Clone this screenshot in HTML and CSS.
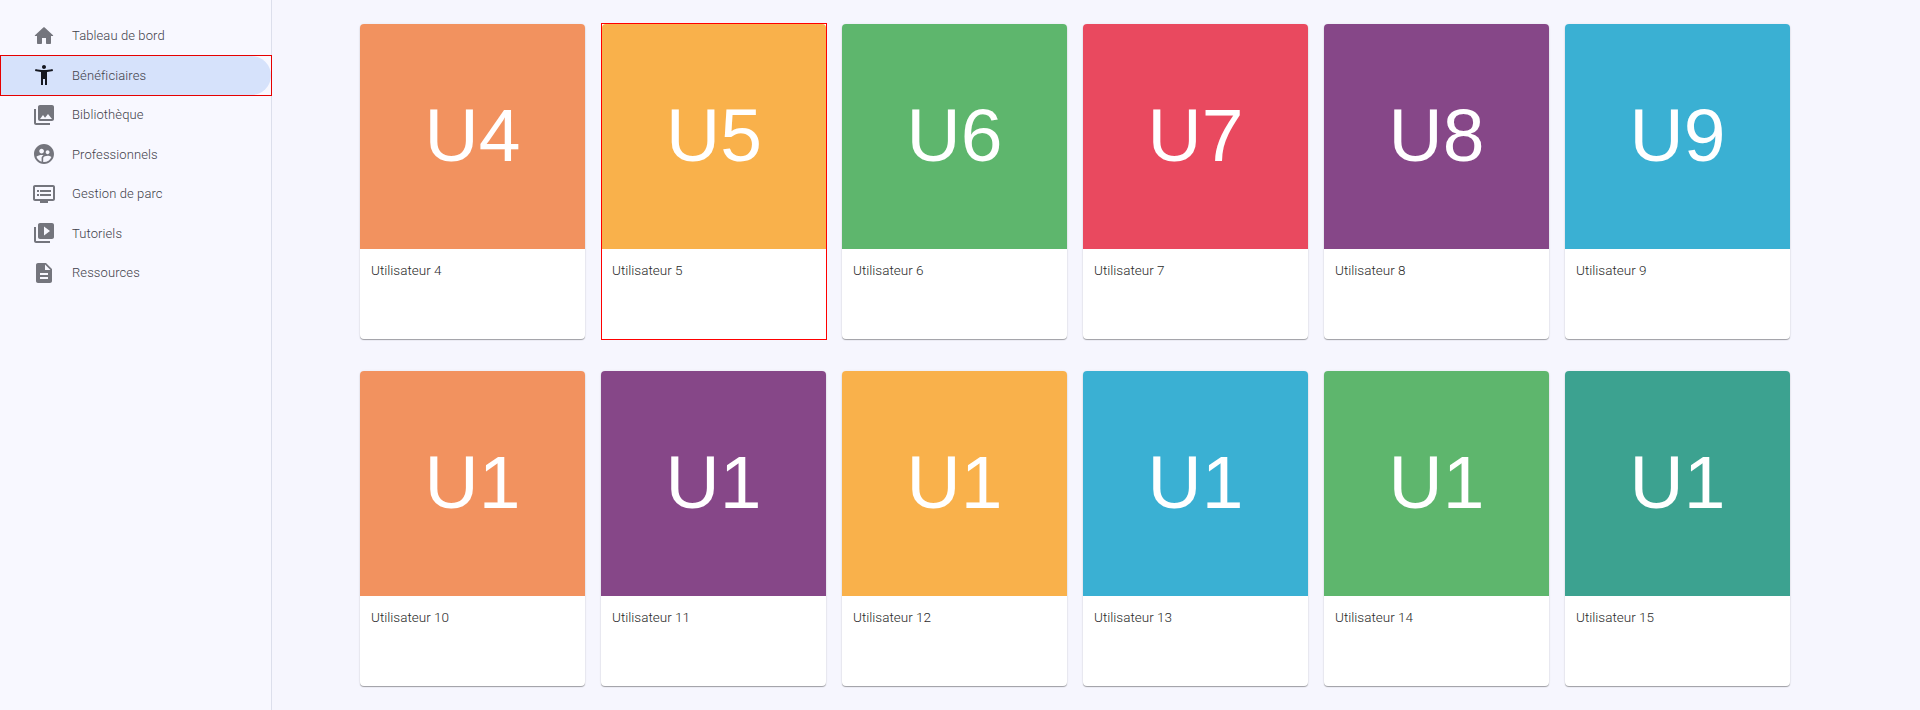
FILE: index.html
```html
<!DOCTYPE html>
<html lang="fr">
<head>
  <meta charset="UTF-8">
  <title>Bénéficiaires</title>
  <meta name="viewport" content="width=device-width,initial-scale=1">
  <link rel="stylesheet" href="styles.css">
</head>
<body>
  <div class="layout">
    <nav class="sidebar">
      <ul class="nav-list">
        <li class="nav-item">
          <a class="nav-link">
            <svg class="nav-icon" viewBox="0 0 24 24"><path d="M10 19v-5h4v5c0 .55.45 1 1 1h3c.55 0 1-.45 1-1v-7h1.7c.46 0 .68-.57.33-.87L12.67 3.6c-.38-.34-.96-.34-1.34 0l-8.36 7.53c-.34.3-.13.87.33.87H5v7c0 .55.45 1 1 1h3c.55 0 1-.45 1-1z"/></svg>
            Tableau de bord
          </a>
        </li>
        <li class="nav-item nav-item-active">
          <a class="nav-link">
            <svg class="nav-icon" viewBox="0 0 24 24"><path d="M20.5 6c-2.61.7-5.67 1-8.5 1s-5.89-.3-8.5-1L3 8c1.86.5 4 .83 6 1v13h2v-6h2v6h2V9c2-.17 4.14-.5 6-1l-.5-2zM12 6c1.1 0 2-.9 2-2s-.9-2-2-2-2 .9-2 2 .9 2 2 2z"/></svg>
            Bénéficiaires
          </a>
        </li>
        <li class="nav-item">
          <a class="nav-link">
            <svg class="nav-icon" viewBox="0 0 24 24"><path d="M22 16V4c0-1.1-.9-2-2-2H8c-1.1 0-2 .9-2 2v12c0 1.1.9 2 2 2h12c1.1 0 2-.9 2-2zm-11-4l2.03 2.71L16 11l4 5H8l3-4zM2 6v14c0 1.1.9 2 2 2h14v-2H4V6H2z"/></svg>
            Bibliothèque
          </a>
        </li>
        <li class="nav-item">
          <a class="nav-link">
            <svg class="nav-icon" viewBox="0 0 24 24"><path d="M11.99 2c-5.52 0-10 4.48-10 10s4.48 10 10 10 10-4.48 10-10-4.48-10-10-10zm3.61 6.34c1.07 0 1.93.86 1.93 1.93 0 1.07-.86 1.93-1.93 1.93-1.07 0-1.93-.86-1.93-1.93-.01-1.07.86-1.93 1.93-1.93zm-6-1.58c1.3 0 2.36 1.06 2.36 2.36 0 1.3-1.06 2.36-2.36 2.36s-2.36-1.06-2.36-2.36c0-1.31 1.05-2.36 2.36-2.36zm0 9.13v3.75c-2.4-.75-4.3-2.6-5.14-4.96 1.05-1.12 3.67-1.69 5.14-1.69.53 0 1.2.08 1.9.22-1.64.87-1.9 2.02-1.9 2.68zM11.99 20c-.27 0-.53-.01-.79-.04v-4.07c0-1.42 2.94-2.13 4.4-2.13 1.07 0 2.92.39 3.84 1.15-1.17 2.97-4.06 5.09-7.45 5.09z"/></svg>
            Professionnels
          </a>
        </li>
        <li class="nav-item">
          <a class="nav-link">
            <svg class="nav-icon" viewBox="0 0 24 24"><path d="M21 3H3c-1.1 0-2 .9-2 2v12c0 1.1.9 2 2 2h5v2h8v-2h5c1.1 0 1.99-.9 1.99-2L23 5c0-1.1-.9-2-2-2zm0 14H3V5h18v12zm-2-9H8v2h11V8zm0 4H8v2h11v-2zM7 8H5v2h2V8zm0 4H5v2h2v-2z"/></svg>
            Gestion de parc
          </a>
        </li>
        <li class="nav-item">
          <a class="nav-link">
            <svg class="nav-icon" viewBox="0 0 24 24"><path d="M4 6H2v14c0 1.1.9 2 2 2h14v-2H4V6zm16-4H8c-1.1 0-2 .9-2 2v12c0 1.1.9 2 2 2h12c1.1 0 2-.9 2-2V4c0-1.1-.9-2-2-2zm-8 12.5v-9l6 4.5-6 4.5z"/></svg>
            Tutoriels
          </a>
        </li>
        <li class="nav-item">
          <a class="nav-link">
            <svg class="nav-icon" viewBox="0 0 24 24"><path d="M14 2H6c-1.1 0-1.99.9-1.99 2L4 20c0 1.1.89 2 1.99 2H18c1.1 0 2-.9 2-2V8l-6-6zm2 16H8v-2h8v2zm0-4H8v-2h8v2zm-3-5V3.5L18.5 9H13z"/></svg>
            Ressources
          </a>
        </li>
      </ul>
    </nav>

    <main class="content">
      <div class="user-grid">
        <div class="user-card"><div class="avatar orange">U4</div><div class="user-name">Utilisateur 4</div></div>
        <div class="user-card user-card-active"><div class="avatar yellow">U5</div><div class="user-name">Utilisateur 5</div></div>
        <div class="user-card"><div class="avatar green">U6</div><div class="user-name">Utilisateur 6</div></div>
        <div class="user-card"><div class="avatar red">U7</div><div class="user-name">Utilisateur 7</div></div>
        <div class="user-card"><div class="avatar purple">U8</div><div class="user-name">Utilisateur 8</div></div>
        <div class="user-card"><div class="avatar blue">U9</div><div class="user-name">Utilisateur 9</div></div>
        <div class="user-card"><div class="avatar orange">U1</div><div class="user-name">Utilisateur 10</div></div>
        <div class="user-card"><div class="avatar purple">U1</div><div class="user-name">Utilisateur 11</div></div>
        <div class="user-card"><div class="avatar yellow">U1</div><div class="user-name">Utilisateur 12</div></div>
        <div class="user-card"><div class="avatar blue">U1</div><div class="user-name">Utilisateur 13</div></div>
        <div class="user-card"><div class="avatar green">U1</div><div class="user-name">Utilisateur 14</div></div>
        <div class="user-card"><div class="avatar teal">U1</div><div class="user-name">Utilisateur 15</div></div>
      </div>
    </main>
  </div>
</body>
</html>
```

FILE: styles.css
```css
html, body {
  height: 100%;
}
body {
  margin: 0;
  background: #f6f6fe;
  font-family: Roboto, Arial, sans-serif;
  color: #333;
  overflow: hidden;
}
.layout {
  display: flex;
  height: 710px;
}
.sidebar {
  width: 271px;
  flex-shrink: 0;
  background: #f8f8ff;
  border-right: 1px solid #dcdfec;
}
.nav-list {
  list-style: none;
  margin: 0;
  padding: 16px 0 0;
}
.nav-item {
  height: 39.5px;
}
.nav-link {
  display: flex;
  align-items: center;
  height: 100%;
  padding-left: 32px;
  gap: 16px;
  font-size: 13px;
  font-weight: 300;
  letter-spacing: 0.1px;
  color: #3f3f4a;
}
.nav-icon {
  width: 24px;
  height: 24px;
  fill: #74757d;
  flex-shrink: 0;
}
.nav-item-active {
  margin-left: 1px;
  outline: 1px solid #e60000;
}
.nav-item-active .nav-link {
  background: #d6e2fb;
  border-radius: 0 20px 20px 0;
  padding-left: 31px;
}
.nav-item-active .nav-icon {
  fill: #15171f;
}
.content {
  flex: 1;
  padding: 24px 0 0 88px;
}
.user-grid {
  display: grid;
  grid-template-columns: repeat(6, 225px);
  grid-auto-rows: 315px;
  column-gap: 16px;
  row-gap: 32px;
}
.user-card {
  background: #fff;
  border-radius: 4px;
  overflow: hidden;
  box-shadow: 0 1px 1px #00000059, 0 0 3px #0000000f;
}
.user-card-active {
  margin-left: 1px;
  border-radius: 0;
  outline: 1px solid #f00;
  box-shadow: none;
}
.user-card-active .avatar {
  border-radius: 4px 4px 0 0;
}
.user-card-active .user-name {
  margin-left: -1px;
}
.avatar {
  height: 225px;
  padding-bottom: 3px;
  box-sizing: border-box;
  display: flex;
  align-items: center;
  justify-content: center;
  color: #fff;
  font-family: "Liberation Sans", Arial, sans-serif;
  font-size: 75px;
}
.user-name {
  padding: 13px 11px;
  font-size: 13.5px;
  font-weight: 300;
  line-height: 17px;
  color: #2a2a2a;
}
.orange { background: #f2925f; }
.yellow { background: #f9b14b; }
.green { background: #5eb66d; }
.red { background: #e9495f; }
.purple { background: #864788; }
.blue { background: #3ab0d3; }
.teal { background: #3ca290; }
```
